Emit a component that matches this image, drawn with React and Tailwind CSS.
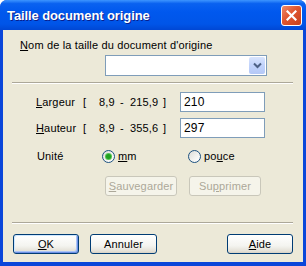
import React, { useState } from "react";

const XpButton = ({ children, width, isDefault, disabled }) => {
  let cls =
    "h-[20px] flex items-center justify-center rounded-[3px] border text-[11px] leading-none ";
  if (disabled) {
    cls += "border-[#C9C7BA] bg-[#F5F4EA] text-[#ACA899]";
  } else {
    cls +=
      "border-[#003C74] text-black bg-[linear-gradient(to_bottom,#FFFFFF_0%,#F4F4F0_60%,#E3E0D6_90%,#D6D0C5_100%)]";
    if (isDefault) {
      cls += " shadow-[inset_1px_1px_0_#CEE7FF,inset_-1px_-1px_0_#6D8FE5,inset_-2px_-2px_0_#A9C4F5]";
    }
  }
  return (
    <button className={cls} style={{ width }}>
      {children}
    </button>
  );
};

const Radio = ({ checked, onClick }) => (
  <div
    onClick={onClick}
    className="w-[13px] h-[13px] rounded-full border border-[#1C5180] bg-[linear-gradient(135deg,#DCDCD7_0%,#F4F4F1_60%,#FFFFFF_100%)] flex items-center justify-center"
  >
    {checked && (
      <div className="w-[5px] h-[5px] rounded-full bg-[#21A121] shadow-[0_0_0_1px_#55C455]" />
    )}
  </div>
);

const Separator = () => (
  <div className="ml-[9px] w-[281px] flex flex-col">
    <div className="h-px bg-[#ACA899]" />
    <div className="h-px bg-white" />
  </div>
);

export default function App() {
  const [unit, setUnit] = useState("mm");
  const [width, setWidth] = useState("210");
  const [height, setHeight] = useState("297");

  return (
    <div className="w-[306px] h-[266px] flex flex-col rounded-t-[7px] overflow-hidden bg-[#0A46DA] font-['Liberation_Sans',Arial,sans-serif] text-[11px] tracking-[0.15px] text-black">
      {/* Title bar */}
      <div className="h-[30px] flex items-center pl-[7px] pr-[4px] pt-[1px] bg-[linear-gradient(to_bottom,#3D95FF_0%,#0A62F0_12%,#0058EE_40%,#0055E8_80%,#0047D4_100%)]">
        <span className="text-white font-bold text-[13px] tracking-[-0.1px] [text-shadow:1px_1px_0_#0A1E8C]">
          Taille document origine
        </span>
        <div className="ml-auto w-[21px] h-[21px] rounded-[3px] border border-white bg-[linear-gradient(135deg,#EE8A6A_0%,#E0562F_45%,#C5401C_100%)] flex items-center justify-center">
          <svg width="11" height="11" viewBox="0 0 11 11">
            <path d="M1.5 1.5 L9.5 9.5 M9.5 1.5 L1.5 9.5" stroke="white" strokeWidth="2.2" strokeLinecap="square" />
          </svg>
        </div>
      </div>

      {/* Body */}
      <div className="flex-1 mx-[3px] mb-[4px] bg-[#ECE9D8] flex flex-col pt-[9px]">
        <div className="pl-[17px] leading-[13px]">
          <u>N</u>om de la taille du document d'origine
        </div>

        {/* Combo */}
        <div className="mt-[3px] ml-[102px] w-[162px] h-[21px] border border-[#7F9DB9] bg-white flex justify-end p-px">
          <div className="w-[16px] h-full rounded-[2px] bg-[linear-gradient(to_bottom,#D8E4FD_0%,#C1D3FB_50%,#B4C8F6_100%)] flex items-center justify-center">
            <svg width="9" height="7" viewBox="0 0 9 7">
              <path d="M1 1.5 L4.5 5 L8 1.5" fill="none" stroke="#4D6185" strokeWidth="2" />
            </svg>
          </div>
        </div>

        <div className="mt-[6px]">
          <Separator />
        </div>

        {/* Largeur */}
        <div className="mt-[8px] ml-[33px] flex items-center h-[20px]">
          <span className="w-[47px]">
            <u>L</u>argeur
          </span>
          <span className="w-[16px]">[</span>
          <span className="w-[21px]">8,9</span>
          <span className="w-[10px]">-</span>
          <span className="w-[33px]">215,9</span>
          <span className="w-[17px]">]</span>
          <input
            value={width}
            onChange={(e) => setWidth(e.target.value)}
            className="w-[85px] h-[20px] border border-[#7F9DB9] bg-white pl-[3px] text-[12px] outline-none"
          />
        </div>

        {/* Hauteur */}
        <div className="mt-[6px] ml-[33px] flex items-center h-[20px]">
          <span className="w-[47px]">
            <u>H</u>auteur
          </span>
          <span className="w-[16px]">[</span>
          <span className="w-[21px]">8,9</span>
          <span className="w-[10px]">-</span>
          <span className="w-[33px]">355,6</span>
          <span className="w-[17px]">]</span>
          <input
            value={height}
            onChange={(e) => setHeight(e.target.value)}
            className="w-[85px] h-[20px] border border-[#7F9DB9] bg-white pl-[3px] text-[12px] outline-none"
          />
        </div>

        {/* Unité */}
        <div className="mt-[12px] ml-[34px] flex items-center h-[13px]">
          <span className="w-[65px]">Unité</span>
          <div className="w-[86px] flex items-center gap-[3px]">
            <Radio checked={unit === "mm"} onClick={() => setUnit("mm")} />
            <span>
              <u>m</u>m
            </span>
          </div>
          <div className="flex items-center gap-[3px]">
            <Radio checked={unit === "pouce"} onClick={() => setUnit("pouce")} />
            <span>
              po<u>u</u>ce
            </span>
          </div>
        </div>

        {/* Sauvegarder / Supprimer */}
        <div className="mt-[13px] ml-[102px] flex gap-[12px]">
          <XpButton width={72} disabled>
            <span>
              <u>S</u>auvegarder
            </span>
          </XpButton>
          <XpButton width={72} disabled>
            <span>
              Su<u>p</u>primer
            </span>
          </XpButton>
        </div>

        <div className="mt-[26px]">
          <Separator />
        </div>

        {/* Bottom buttons */}
        <div className="mt-[10px] ml-[10px] flex">
          <XpButton width={66} isDefault>
            <span>
              <u>O</u>K
            </span>
          </XpButton>
          <div className="ml-[11px]">
            <XpButton width={67}>Annuler</XpButton>
          </div>
          <div className="ml-[70px]">
            <XpButton width={66}>
              <span>
                <u>A</u>ide
              </span>
            </XpButton>
          </div>
        </div>
      </div>
    </div>
  );
}
